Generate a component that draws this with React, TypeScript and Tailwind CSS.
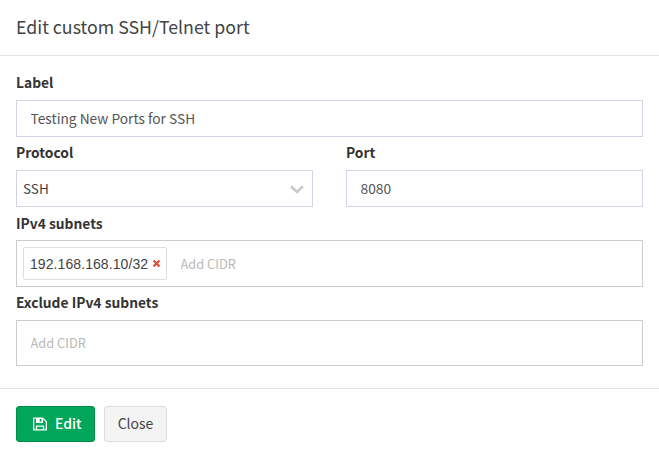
import type { ReactNode } from "react";

function Label({ htmlFor, children }: { htmlFor: string; children: ReactNode }) {
  return (
    <label htmlFor={htmlFor} className="flex h-[33px] items-center pb-[3px] text-[13.8px] font-bold leading-5 text-[#333]">
      {children}
    </label>
  );
}

function SaveIcon() {
  return (
    <svg viewBox="0 0 14 14" className="h-[14px] w-[14px]" fill="none" stroke="currentColor" strokeWidth="1.3" aria-hidden="true">
      <path d="M.65 1.15H9.7L13.35 4.6v8.25H.65Z" strokeLinejoin="round" />
      <path d="M3.5 12.5V9.15h7V12.5" />
      <path d="M3 1H10V6H3ZM6.7 2V4.8H8.4V2Z" fill="currentColor" fillRule="evenodd" stroke="none" />
    </svg>
  );
}

const field = "h-[37px] w-full border border-[#d0d5e1] bg-white pl-[13.5px] pr-[13px] pb-[2px] text-[13.75px] text-[#555] outline-none";
const cidr = "min-w-0 flex-1 bg-transparent text-[12.8px] text-[#555] outline-none placeholder:text-[#b8b8b8]";

export default function App() {
  return (
    <div className="h-[456px] w-full overflow-hidden bg-white font-['Noto_Sans_CJK_SC',sans-serif]">
      <header className="flex h-14 items-center border-b border-[#e5e5e5] px-4 pb-[3px]">
        <h1 className="text-[17.75px] leading-6 text-[#444]">Edit custom SSH/Telnet port</h1>
      </header>

      <main className="h-[332px] px-4 pt-[11px]">
        <Label htmlFor="label">Label</Label>
        <input id="label" className={field} defaultValue="Testing New Ports for SSH" />

        <div className="grid grid-cols-2 gap-[33px]">
          <div>
            <Label htmlFor="protocol">Protocol</Label>
            <button id="protocol" className="flex h-[37px] w-full items-center justify-between border border-[#d0d5e1] pl-[6px] pr-[8px] text-[13.5px] text-[#444]">
              SSH
              <svg viewBox="0 0 14 9" className="mt-px h-[9px] w-[14px]" fill="none" stroke="#ccc" strokeWidth="2.8" aria-hidden="true">
                <path d="M1 1.4 7 6.8 13 1.4" />
              </svg>
            </button>
          </div>
          <div>
            <Label htmlFor="port">Port</Label>
            <input id="port" className={field} defaultValue="8080" />
          </div>
        </div>

        <div className="pt-px">
          <div className="-mb-px">
            <Label htmlFor="subnets">IPv4 subnets</Label>
          </div>
        </div>
        <div className="flex h-[47px] items-center border border-[#ccc] pl-[6px]">
          <span className="mr-[13.5px] flex h-[33px] w-[144px] shrink-0 items-center justify-between rounded-xs border border-[#ddd] px-[6px] font-['Liberation_Sans',sans-serif] text-[14px] text-[#444]">
            <span className="pt-px tracking-[0.08px]">192.168.168.10/32</span>
            <svg viewBox="0 0 7 7" className="h-[7px] w-[7px]" stroke="#e74c3c" strokeWidth="2.2" aria-label="Remove">
              <path d="M.5.5 6.5 6.5M6.5.5.5 6.5" />
            </svg>
          </span>
          <input id="subnets" className={cidr} placeholder="Add CIDR" />
        </div>

        <Label htmlFor="exclude">Exclude IPv4 subnets</Label>
        <div className="flex h-[46px] items-center border border-[#ccc] pl-[13.5px]">
          <input id="exclude" className={cidr} placeholder="Add CIDR" />
        </div>
      </main>

      <footer className="flex gap-[9px] border-t border-[#e5e5e5] px-4 pt-[17px]">
        <button className="flex h-9 w-[79px] items-center gap-2 rounded-[3px] border border-[#008d4c] bg-[#00a65a] pl-4 text-[14px] font-medium text-white">
          <SaveIcon />
          <span className="pb-px">Edit</span>
        </button>
        <button className="h-9 w-[63px] rounded-[3px] border border-[#ddd] bg-[#f4f4f4] pb-px text-[14px] text-[#444]">Close</button>
      </footer>
    </div>
  );
}
